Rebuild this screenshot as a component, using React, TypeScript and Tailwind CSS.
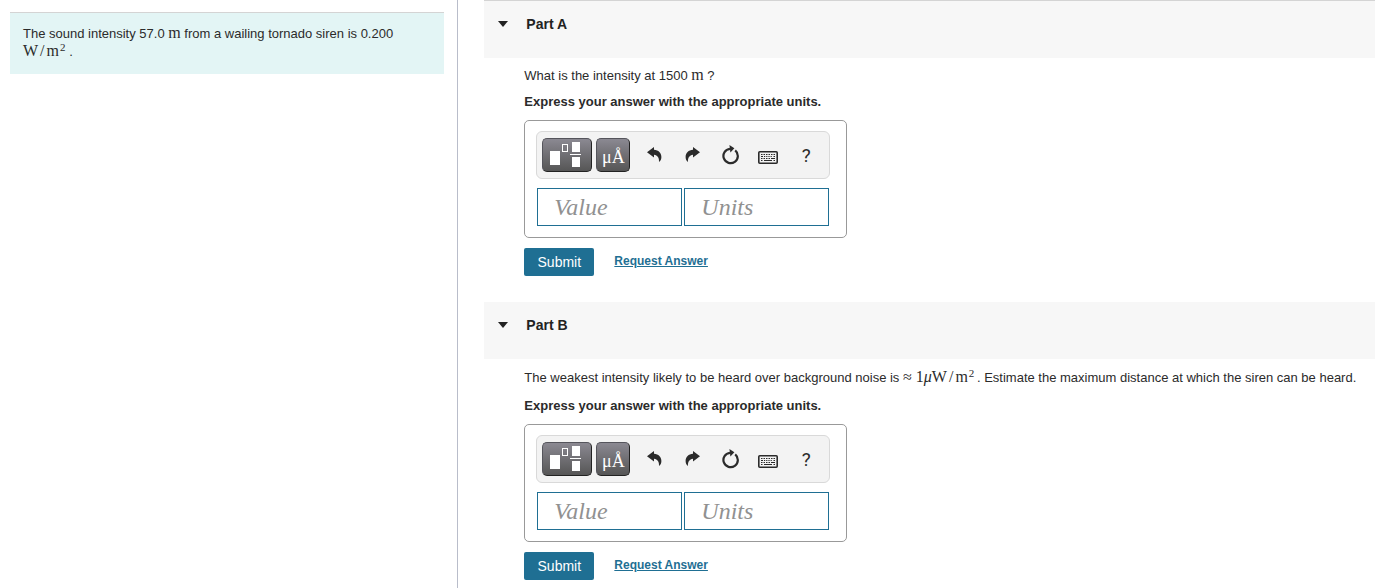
import { useState } from 'react';
import type { ReactNode } from 'react';

interface PartProps {
  id: string;
  title: string;
  first?: boolean;
  children: ReactNode;
}

// upright serif run for units and math symbols, kept from stretching the line
function MathText({ children }: { children: ReactNode }) {
  return <span className="font-['Liberation_Serif',serif] text-[16px] leading-0 whitespace-nowrap">{children}</span>;
}

function WattsPerSquareMetre() {
  return (
    <>
      W<span className="mx-[2px]">/</span>m
      <sup className="-top-[5px] ml-px text-[11px] leading-0">2</sup>
    </>
  );
}

function TemplateIcon() {
  return (
    <svg width="34" height="26" viewBox="0 0 34 26" fill="#fff" aria-hidden="true">
      <rect x="0" y="9" width="10" height="14" />
      <rect x="12.5" y="2.5" width="5" height="7" fill="none" stroke="#fff" />
      <rect x="22" y="0" width="8" height="10" />
      <rect x="20" y="12" width="11" height="1" />
      <rect x="22" y="15" width="8" height="10" />
    </svg>
  );
}

function UndoIcon() {
  return (
    <svg width="15" height="18" viewBox="0 0 15 18" fill="#2b2b2b" aria-hidden="true">
      <path d="M0 6.2 L7 1 V3.8 C11.5 4 14.4 7 14.4 11 C14.4 13 13.6 15 12 16 C12.4 12 10.6 9.2 7 8.8 V11.6 Z" />
    </svg>
  );
}

function RedoIcon() {
  return (
    <svg width="15" height="18" viewBox="0 0 15 18" fill="#2b2b2b" aria-hidden="true">
      <path d="M15 6.2 L8 1 V3.8 C3.5 4 0.6 7 0.6 11 C0.6 13 1.4 15 3 16 C2.6 12 4.4 9.2 8 8.8 V11.6 Z" />
    </svg>
  );
}

function ResetIcon() {
  return (
    <svg width="20" height="20" viewBox="0 0 20 20" fill="none" aria-hidden="true">
      <path d="M15.2 5.4 A7.2 7.2 0 1 1 10 3.8" stroke="#2b2b2b" strokeWidth="2.2" />
      <path d="M9.4 0 L14.4 3.3 L10.4 7.6 Z" fill="#2b2b2b" />
    </svg>
  );
}

function KeyboardIcon() {
  return (
    <svg width="20" height="17" viewBox="0 0 20 17" fill="none" aria-hidden="true">
      <rect x="0.8" y="4.8" width="18.4" height="11.4" rx="1" stroke="#2b2b2b" strokeWidth="1.6" />
      <path d="M3 7.5 H17" stroke="#2b2b2b" strokeDasharray="1.5 1" />
      <path d="M3 9.5 H5 M6 9.5 H7.2 M8.2 9.5 H9.4 M10.4 9.5 H11.6 M12.6 9.5 H13.8 M15.5 9.5 H17" stroke="#2b2b2b" />
      <path d="M3 11.5 H4.5 M5.5 11.5 H7 M8 11.5 H9.5 M10.5 11.5 H12 M13 11.5 H17" stroke="#2b2b2b" />
      <path d="M3 13.5 H4.5 M6 13.5 H14 M15.5 13.5 H17" stroke="#2b2b2b" />
    </svg>
  );
}

const tools = [
  { label: 'Undo', icon: <UndoIcon /> },
  { label: 'Redo', icon: <RedoIcon /> },
  { label: 'Reset', icon: <ResetIcon /> },
  { label: 'Keyboard shortcuts', icon: <KeyboardIcon /> },
];

const darkButton =
  'flex h-[34px] items-center justify-center rounded-[5px] border border-[#222] border-t-[#55555c] border-l-[#55555c] bg-linear-to-b from-[#8b8992] to-[#565656] text-white';

const fieldClass =
  "h-[38px] w-[145px] border border-[#1f6f93] bg-white pl-4 pr-2 font-['Liberation_Serif',serif] text-[24px] text-[#222] outline-none placeholder:italic placeholder:text-[#919191] placeholder:opacity-100";

function Toolbar() {
  return (
    <div className="flex h-12 w-[294px] items-center rounded-[6px] border border-[#d9d9d9] bg-[#f3f3f3] pl-[5px]">
      <button type="button" aria-label="Templates" className={`${darkButton} w-[50px]`}>
        <TemplateIcon />
      </button>
      <button type="button" aria-label="Units" className={`${darkButton} ml-1 w-[34px] pt-1 font-['Liberation_Serif',serif] text-[18px] leading-none`}>
        μÅ
      </button>
      <div className="ml-[5px] flex">
        {tools.map((t) => (
          <button key={t.label} type="button" aria-label={t.label} className="flex h-[34px] w-[38px] items-center justify-center">
            {t.icon}
          </button>
        ))}
        <button type="button" aria-label="Help" className="h-[34px] w-[38px] font-[Roboto,sans-serif] text-[19px] leading-none text-[#2b2b2b]">
          ?
        </button>
      </div>
    </div>
  );
}

function AnswerForm({ id }: { id: string }) {
  const [value, setValue] = useState('');
  const [units, setUnits] = useState('');

  return (
    <form onSubmit={(e) => e.preventDefault()}>
      <div className="w-fit rounded-[5px] border border-[#999] pt-[10px] pr-4 pb-[11px] pl-[11px]">
        <Toolbar />
        <div className="mt-[9px] flex gap-[2px] pl-px">
          <input
            id={`value-${id}`}
            aria-label="Value"
            placeholder="Value"
            value={value}
            onChange={(e) => setValue(e.target.value)}
            className={fieldClass}
          />
          <input
            id={`units-${id}`}
            aria-label="Units"
            placeholder="Units"
            value={units}
            onChange={(e) => setUnits(e.target.value)}
            className={fieldClass}
          />
        </div>
      </div>
      <div className="mt-[10px] flex items-start gap-5">
        <button type="submit" className="h-7 w-[70px] rounded-[2px] bg-[#1f6f93] text-[14px] text-white">
          Submit
        </button>
        <a href="#" className="pt-[5px] text-[12px] leading-4 font-bold text-[#1f6f93] underline">
          Request Answer
        </a>
      </div>
    </form>
  );
}

function Part({ id, title, first, children }: PartProps) {
  const [open, setOpen] = useState(true);

  return (
    <section className="pb-[26px]">
      <h2 className={`bg-[#f7f7f7] ${first ? 'h-[58px] border-t border-[#d4d4d4]' : 'h-[57px]'}`}>
        <button
          type="button"
          aria-expanded={open}
          onClick={() => setOpen(!open)}
          className="flex h-[46px] w-full items-center pl-[14px] text-left text-[14px] font-bold text-[#222]"
        >
          <svg width="10" height="6" viewBox="0 0 10 6" fill="#222" className="mr-[18px]" aria-hidden="true">
            <path d="M0 0 H10 L5 6 Z" />
          </svg>
          {title}
        </button>
      </h2>
      {open && (
        <div className="pt-2 pl-10">
          <p className={first ? 'leading-[19px]' : 'leading-[22px]'}>{children}</p>
          <p className="mt-2 mb-[9px] font-bold">Express your answer with the appropriate units.</p>
          <AnswerForm id={id} />
        </div>
      )}
    </section>
  );
}

export default function App() {
  return (
    <div className="flex h-screen overflow-hidden bg-white font-['Liberation_Sans',Arial,sans-serif] text-[13px] leading-[18px] text-[#2b2b2b]">
      <aside className="w-1/3 shrink-0 border-r border-[#b9bdca] pt-3 pr-[13px] pl-[10px]">
        <div className="border-t border-[#d4d4d4] bg-[#e3f5f5] px-[13px] pt-3 pb-[13px]">
          The sound intensity 57.0 <MathText>m</MathText> from a wailing tornado siren is 0.200{' '}
          <MathText>
            <WattsPerSquareMetre />
          </MathText>{' '}
          .
        </div>
      </aside>
      <main className="min-w-0 flex-1 pl-[26px]">
        <Part id="a" title="Part A" first>
          What is the intensity at 1500 <MathText>m</MathText> ?
        </Part>
        <Part id="b" title="Part B">
          The weakest intensity likely to be heard over background noise is{' '}
          <MathText>
            ≈ 1<i>μ</i>
            <WattsPerSquareMetre />
          </MathText>
          {'\u2009'}. Estimate the maximum distance at which the siren can be heard.
        </Part>
      </main>
    </div>
  );
}
